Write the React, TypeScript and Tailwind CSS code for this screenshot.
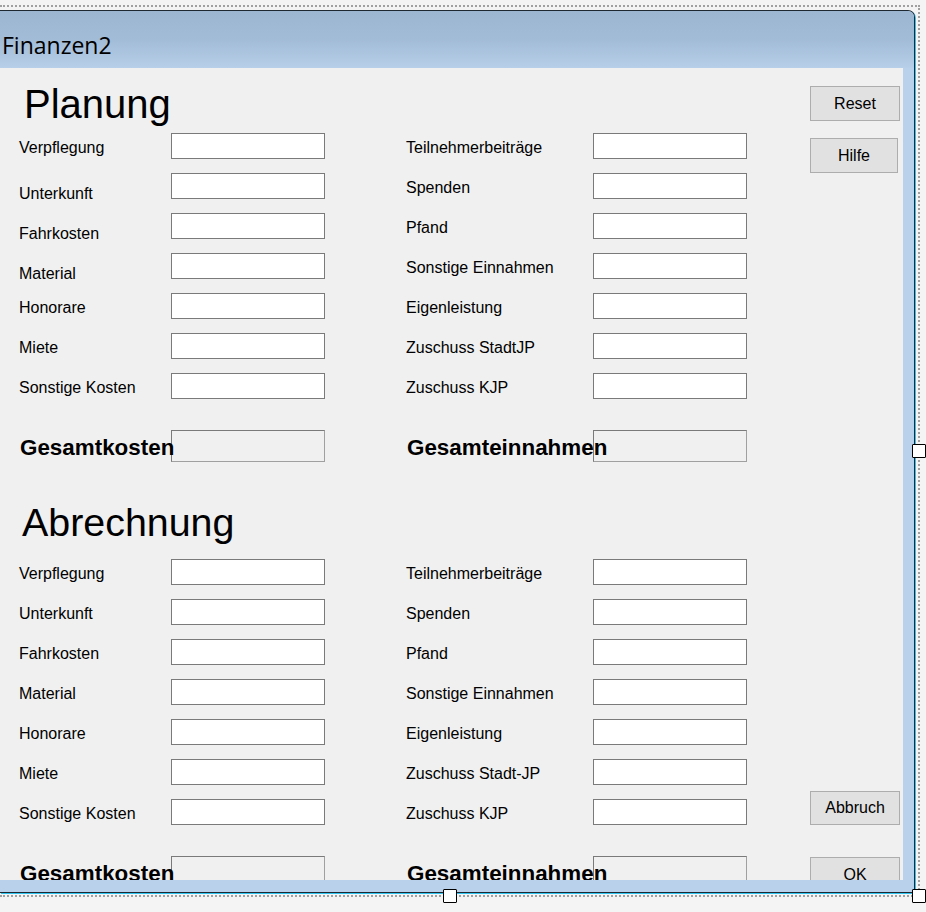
import React from "react";

const planLeft = [
  { name: "Verpflegung", low: false },
  { name: "Unterkunft", low: true },
  { name: "Fahrkosten", low: true },
  { name: "Material", low: true },
  { name: "Honorare", low: false },
  { name: "Miete", low: false },
  { name: "Sonstige Kosten", low: false },
];

const planRight = [
  "Teilnehmerbeiträge",
  "Spenden",
  "Pfand",
  "Sonstige Einnahmen",
  "Eigenleistung",
  "Zuschuss StadtJP",
  "Zuschuss KJP",
];

const abrLeft = [
  { name: "Verpflegung", low: false },
  { name: "Unterkunft", low: false },
  { name: "Fahrkosten", low: false },
  { name: "Material", low: false },
  { name: "Honorare", low: false },
  { name: "Miete", low: false },
  { name: "Sonstige Kosten", low: false },
];

const abrRight = [
  "Teilnehmerbeiträge",
  "Spenden",
  "Pfand",
  "Sonstige Einnahmen",
  "Eigenleistung",
  "Zuschuss Stadt-JP",
  "Zuschuss KJP",
];

const Field = ({ label, low, labelWidth }: { label: string; low?: boolean; labelWidth: string }) => (
  <div className="flex h-[26px] items-center">
    <span className={`${labelWidth} text-[16px] leading-[18px] text-black ${low ? "mt-[16px]" : "mt-[4px]"}`}>{label}</span>
    <div className="w-[154px] h-[26px] bg-white border border-[#7a7a7a]" />
  </div>
);

const Section = ({
  title,
  titleClass,
  gap,
  left,
  right,
}: {
  title: string;
  titleClass: string;
  gap: string;
  left: { name: string; low: boolean }[];
  right: string[];
}) => (
  <div className="flex flex-col">
    <h1 className={`h-[40px] leading-[40px] text-black ${titleClass}`}>{title}</h1>
    <div className={`${gap} flex flex-col`}>
      {left.map((item, i) => (
        <div key={item.name + i} className="flex h-[40px]">
          <Field label={item.name} low={item.low} labelWidth="w-[152px]" />
          <div className="w-[81px]" />
          <Field label={right[i]} labelWidth="w-[187px]" />
        </div>
      ))}
    </div>
    <div className="mt-[17px] flex h-[32px] items-center">
      <span className="relative z-10 w-[152px] pl-[1px] whitespace-nowrap text-[22.4px] font-bold leading-[24px] mt-[3px] text-black">
        Gesamtkosten
      </span>
      <div className="w-[154px] h-[32px] bg-[#f0f0f0] border border-[#7a7a7a] border-r-[#a0a0a0] border-b-[#a0a0a0]" />
      <div className="w-[81px]" />
      <span className="relative z-10 w-[187px] pl-[1px] whitespace-nowrap text-[22.4px] font-bold leading-[24px] mt-[3px] text-black">
        Gesamteinnahmen
      </span>
      <div className="w-[154px] h-[32px] bg-[#f0f0f0] border border-[#7a7a7a] border-r-[#a0a0a0] border-b-[#a0a0a0]" />
    </div>
  </div>
);

const Button = ({ label, width, height, className }: { label: string; width: string; height: string; className: string }) => (
  <button
    className={`${width} ${height} ${className} flex items-center justify-center bg-[#e1e1e1] border border-[#adadad] text-[16px] text-black`}
  >
    {label}
  </button>
);

const Handle = ({ className }: { className: string }) => (
  <div className={`absolute w-[14px] h-[14px] bg-white border border-black rounded-[1px] ${className}`} />
);

export default function App() {
  return (
    <div
      className="relative w-[926px] h-[912px] overflow-hidden bg-[#f4f4f4]"
      style={{ fontFamily: '"Liberation Sans", Arial, sans-serif' }}
    >
      <div className="mt-[5px] w-[920px] h-[892px] border-t-2 border-r-2 border-b-2 border-dotted border-[#a0a0a0] pt-[3px] pr-[3px] pb-[2px]">
        <div className="flex h-full w-full flex-col overflow-hidden rounded-tr-[7px] border-t border-r border-b border-[#1e2830] bg-[#b9d1ea] shadow-[1px_1px_0_#2fc3f0]">
          <div className="h-[57px] shrink-0 bg-linear-to-b from-[#9cb6d2] via-[#a2bbd7] to-[#b7cfe8] pl-[2px] pt-[19px]">
            <span
              className="text-[23px] leading-[30px] text-black"
              style={{ fontFamily: '"Open Sans", "Noto Sans", sans-serif' }}
            >
              Finanzen2
            </span>
          </div>
          <div className="flex w-[903px] h-[812px] shrink-0 overflow-hidden bg-[#f0f0f0]">
            <div className="w-[810px] pl-[19px]">
              <div className="mt-[16px]">
                <Section
                  title="Planung"
                  titleClass="ml-[5px] text-[40px]"
                  gap="mt-[9px]"
                  left={planLeft}
                  right={planRight}
                />
              </div>
              <div className="mt-[40px]">
                <Section
                  title="Abrechnung"
                  titleClass="ml-[3px] text-[39.4px]"
                  gap="mt-[17px]"
                  left={abrLeft}
                  right={abrRight}
                />
              </div>
            </div>
            <div className="flex w-[90px] flex-col">
              <Button label="Reset" width="w-[90px]" height="h-[35px]" className="mt-[18px] shrink-0" />
              <Button label="Hilfe" width="w-[88px]" height="h-[35px]" className="mt-[17px] shrink-0" />
              <Button label="Abbruch" width="w-[90px]" height="h-[34px]" className="mt-[618px] shrink-0" />
              <Button label="OK" width="w-[90px]" height="h-[35px]" className="mt-[32px] shrink-0" />
            </div>
          </div>
        </div>
      </div>
      <Handle className="left-[912px] top-[444px]" />
      <Handle className="left-[443px] top-[889px]" />
      <Handle className="left-[912px] top-[889px]" />
    </div>
  );
}
